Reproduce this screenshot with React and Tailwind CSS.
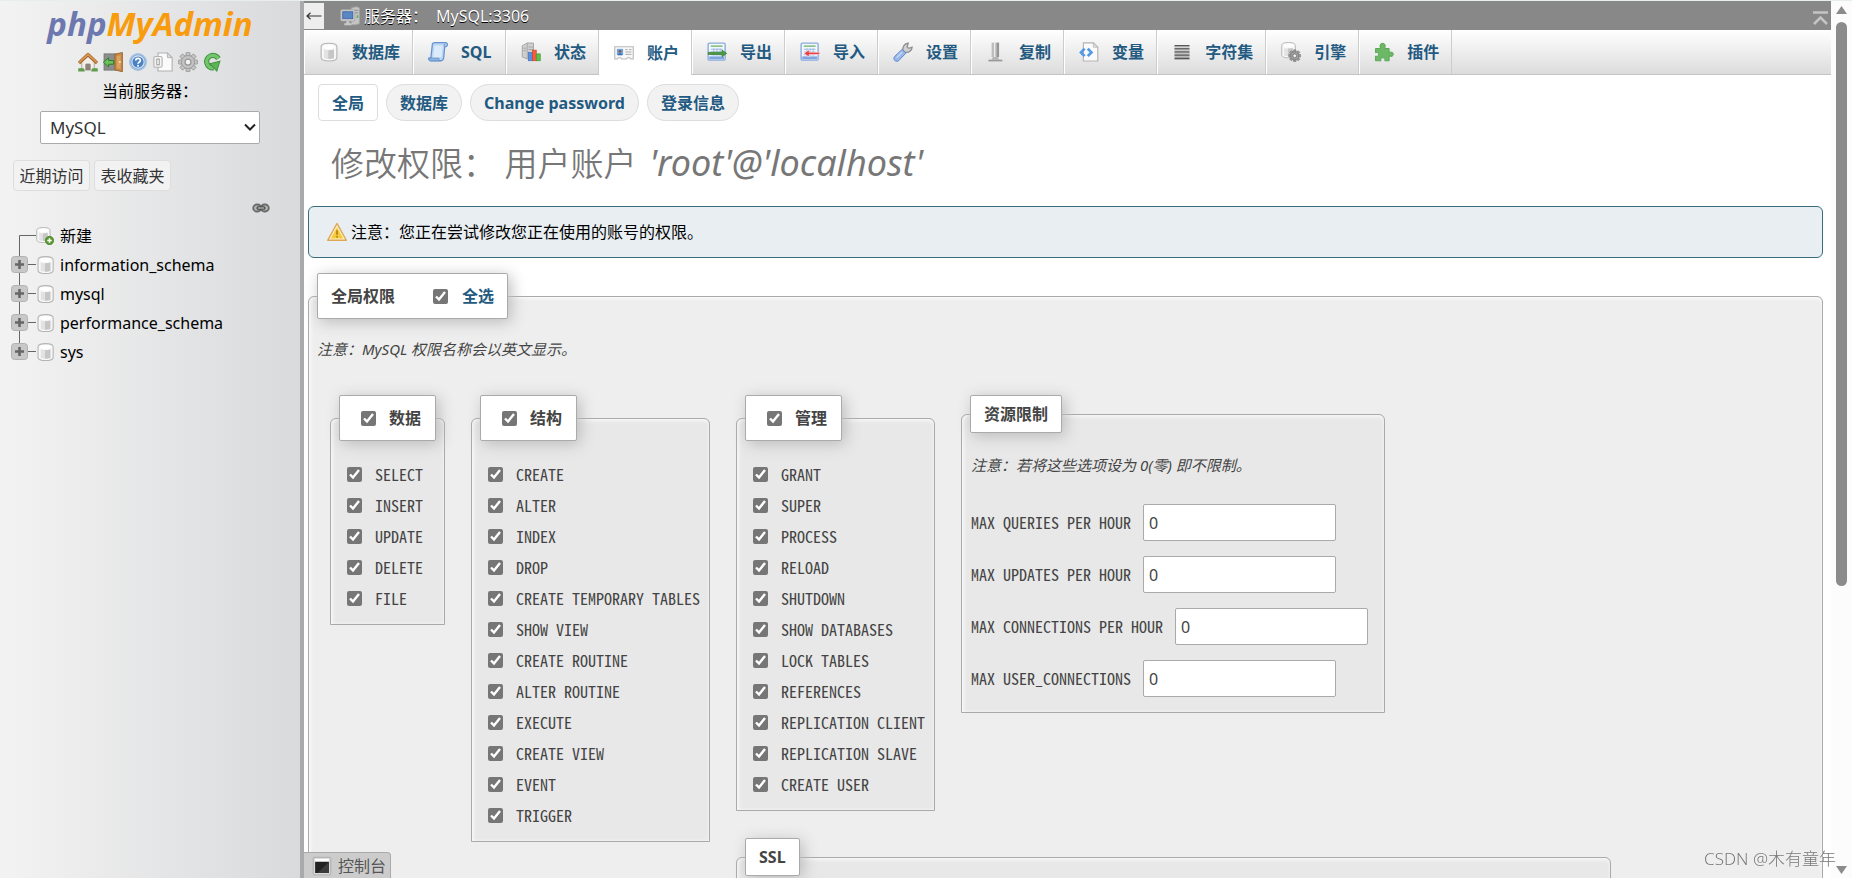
import React from "react";

/* ---------- icons ---------- */

const Icon = ({ children, size = "size-5", box = "0 0 16 16" }) => (
  <svg viewBox={box} className={`${size} shrink-0`} aria-hidden="true">
    {children}
  </svg>
);

const Cylinder = ({ x = 0, y = 0 }) => (
  <g transform={`translate(${x} ${y})`}>
    <path d="M.7 3.300C.7 1.200 3.500.5 7 .5s6.300.7 6.300 2.800v8.600c0 2.100-2.800 2.800-6.300 2.800S.7 14 .7 11.900z" fill="#f7f7f7" stroke="#b4b4b4" strokeWidth=".9" />
    <path d="M3 5.500c2.500.8 5.500.8 8 0v7c-2.300.8-5.700.8-8 0z" fill="#e2e2e2" />
    <path d="M6.500 6.100c1.600 0 3.200-.2 4.500-.6v7c-1.300.4-2.900.6-4.500.6z" fill="#c6c6c6" />
    <ellipse cx="7" cy="3.300" rx="4.800" ry="1.700" fill="#fff" />
  </g>
);

const DbIcon = () => <Icon size="size-[18px]" box="-1 0 15 15"><Cylinder /></Icon>;

const NewDbIcon = () => (
  <Icon size="size-[18px]" box="0 0 16 16">
    <g transform="scale(.94)"><Cylinder /></g>
    <circle cx="12" cy="12" r="3.700" fill="#5a9a2f" stroke="#3f7a1d" strokeWidth=".6" />
    <path d="M12 10v4M10 12h4" stroke="#fff" strokeWidth="1.400" />
  </Icon>
);

const HomeIcon = () => (
  <Icon>
    <path d="M3 8v6.500h3V10h4v4.500h3V8L8 3.500z" fill="#f1eee8" stroke="#a79f93" strokeWidth=".7" />
    <rect x="6.300" y="9.300" width="3.400" height="5.400" fill="#8d8378" />
    <path d="M.8 8.800 8 2l7.200 6.800" fill="none" stroke="#a8672a" strokeWidth="2.600" strokeLinejoin="round" />
    <path d="M1 8.400 8 1.900l7 6.500" fill="none" stroke="#d99a55" strokeWidth="1.200" />
    <path d="M.2 13h4.300l1 2.500H.2zM11.500 13h4.300v2.500h-5.300z" fill="#5c9e4c" />
  </Icon>
);

const ExitIcon = () => (
  <Icon>
    <rect x=".8" y="1.500" width="10" height="13" fill="#8b8f8c" stroke="#6d6f6e" strokeWidth=".6" />
    <path d="M9.500 1.800 15.500.4v15.400l-6-1.500z" fill="#c98a45" stroke="#93602a" strokeWidth=".7" />
    <path d="M11 3.200l3-.6v10.900l-3-.6z" fill="#dba263" />
    <circle cx="13.500" cy="8" r=".8" fill="#ffe9a0" />
    <path d="M.3 8.200 4.500 4.600v2.200h4v3h-4V12z" fill="#6cc05b" stroke="#2f7f2c" strokeWidth=".8" />
  </Icon>
);

const HelpIcon = () => (
  <Icon>
    <circle cx="8" cy="8" r="6.600" fill="#7ea7d8" stroke="#a9c2de" strokeWidth="1.200" />
    <circle cx="8" cy="8" r="4.900" fill="#4a80c4" stroke="#d8e6f5" strokeWidth=".9" />
    <path d="M6.200 6.800c0-2.300 3.700-2.300 3.700-.1 0 1.300-1.800 1.400-1.800 2.700" fill="none" stroke="#fff" strokeWidth="1.400" />
    <circle cx="8" cy="11" r=".8" fill="#fff" />
  </Icon>
);

const DocsIcon = () => (
  <Icon>
    <path d="M4 .8h7.500L15.300 4.500v10.700H4z" fill="#fbfbfb" stroke="#b0b0b0" strokeWidth=".9" />
    <path d="M11.500.8v3.700h3.800z" fill="#ddd" stroke="#b0b0b0" strokeWidth=".7" />
    <rect x=".7" y="3.600" width="6.600" height="8.600" rx="1.200" fill="#f4f4f4" stroke="#b3b3b3" strokeWidth=".9" />
    <rect x="3" y="5.700" width="2" height="4.500" fill="#fff" stroke="#a3a3a3" strokeWidth=".9" />
  </Icon>
);

const Gear = ({ cx, cy, r, fill, stroke }) => (
  <g transform={`translate(${cx} ${cy}) scale(${r / 8})`}>
    {[0, 45, 90, 135, 180, 225, 270, 315].map((a) => (
      <rect key={a} x="-1.600" y="-7.700" width="3.200" height="4" rx=".5" transform={`rotate(${a})`} fill={fill} stroke={stroke} strokeWidth=".7" />
    ))}
    <circle r="5.200" fill={fill} stroke={stroke} strokeWidth=".7" />
    <circle r="2.400" fill="#f2f2f2" stroke={stroke} strokeWidth="1" />
  </g>
);

const GearIcon = () => <Icon><Gear cx={8} cy={8} r={8} fill="#c4c4c4" stroke="#969696" /></Icon>;

const ReloadIcon = () => (
  <Icon>
    <path d="M12.300 5.300A5 5 0 1 0 8.500 12.700" fill="none" stroke="#3f9440" strokeWidth="4.200" />
    <path d="M12.300 5.300A5 5 0 1 0 8.500 12.700" fill="none" stroke="#74c46c" strokeWidth="2.600" />
    <path d="M6 8.300h8.300L10 15.400z" fill="#5db456" stroke="#3f9440" strokeWidth=".8" transform="rotate(-14 10 11)" />
  </Icon>
);

const LinkIcon = () => (
  <Icon size="h-[10px] w-[18px]" box="0 0 18 10">
    <rect x="1.200" y="1.500" width="8" height="7" rx="3.500" fill="#b4b4b4" stroke="#6a6a6a" strokeWidth="1.800" />
    <rect x="8.800" y="1.500" width="8" height="7" rx="3.500" fill="#b4b4b4" stroke="#6a6a6a" strokeWidth="1.800" />
    <rect x="5" y="3.800" width="8" height="2.400" rx="1.200" fill="#ddd" stroke="#444" strokeWidth="1.200" />
  </Icon>
);

const ServerIcon = () => (
  <Icon>
    <path d="M9 1.500 13 .6l2.500.8v12.800l-3 .8H9z" fill="#c4c4c4" stroke="#a5a5a5" strokeWidth=".7" />
    <path d="M10 3.500h4.500M10 5.500h4.500" stroke="#888" strokeWidth=".7" />
    <path d="M14 7.500v2" stroke="#4fae4a" strokeWidth="1.200" />
    <rect x=".6" y="3" width="11.300" height="9" rx=".8" fill="#d0d0d0" stroke="#a5a5a5" strokeWidth=".7" />
    <rect x="2.200" y="4.600" width="8.100" height="5.600" fill="#5b86c4" stroke="#335d9e" strokeWidth=".6" />
    <path d="M5 12.200h2.600v1.600H9.200v1.500H3.400v-1.500H5z" fill="#c9c9c9" />
  </Icon>
);

const SqlIcon = () => (
  <Icon>
    <path d="M3.500 1.500c.4-.8 1-1 2-1h8.200c1.500 0 2 1 1.700 2.200-.2.900-.9 1.100-2 1.100L12.600 12c-.1 1.700-.8 3-2.400 3H2C.8 15 .4 13.800.7 12.800h1.600z" fill="#bcd6f5" stroke="#6492cc" strokeWidth="1" />
    <path d="M5.200 2.700h6.600L10.800 12c-2 .5-4.500.5-6.700.2z" fill="#dcebfb" />
    <path d="M.7 12.900h8c-.1 1 .3 1.800 1.300 2.100H2C.8 15 .4 13.900.7 12.900zM13.500 3.700c-1-.4-.9-2 .3-2.100" fill="#8fb5e4" stroke="#6492cc" strokeWidth=".7" />
  </Icon>
);

const StatusIcon = () => (
  <Icon>
    <path d="M1 3 5 .8h5V13.500H5L1 12z" fill="#cfcfcf" stroke="#a0a0a0" strokeWidth=".7" />
    <path d="M5 .9v12.600M2 5h2M2 7h2M6 4h3.500M6 6h3.500" stroke="#a3a3a3" strokeWidth=".7" />
    <rect x="6" y="8.500" width="3" height="6.500" fill="#5a8fe0" stroke="#3a6cc0" strokeWidth=".5" />
    <rect x="9.200" y="6.500" width="3" height="8.500" fill="#f0603f" stroke="#c93f22" strokeWidth=".5" />
    <rect x="12.400" y="9.500" width="3" height="5.500" fill="#5fbf4b" stroke="#3c962c" strokeWidth=".5" />
  </Icon>
);

const UsersIcon = () => (
  <Icon>
    <path d="M.6 3h14.800v9.800h-2l-.7-1h-1.900l-.7 1H6l-.7-1H3.400l-.7 1H.6z" fill="#f8f8f8" stroke="#b9b9b9" strokeWidth=".9" />
    <rect x="2.300" y="4.700" width="5" height="5" fill="#6ea3e2" />
    <circle cx="4.800" cy="6.600" r="1.100" fill="#8a5a34" />
    <path d="M3 9.700c.2-2 3.400-2 3.600 0z" fill="#3e6fb4" />
    <path d="M9 5.300h2M12 5.300h2M9 7.200h5M9 9.100h5" stroke="#aaa" strokeWidth=".8" />
  </Icon>
);

const Sheet = () => (
  <>
    <rect x=".9" y=".9" width="13.600" height="13.600" rx="1" fill="#f3f8ff" stroke="#8cabdc" strokeWidth="1.100" />
    <rect x="1.800" y="11.500" width="11.800" height="2.300" fill="#7fa5e0" />
    <path d="M3 3.300h9.500" stroke="#76b56a" strokeWidth="1.100" />
    <path d="M3 5.800h9.500M3 8h9.500M3 10.200h9.500M5.500 5v6M8 5v6M10.500 5v6" stroke="#9fb9e2" strokeWidth=".8" />
  </>
);

const ExportIcon = () => (
  <Icon>
    <Sheet />
    <path d="M1 8.200h11V6.400l3.800 2.700-3.800 2.700V10H1z" fill="#4b9a42" stroke="#2f7a2b" strokeWidth=".5" />
  </Icon>
);

const ImportIcon = () => (
  <Icon>
    <Sheet />
    <path d="M15.700 8.200H7.300V6.200L3.200 9.100l4.100 2.900V10h8.400z" fill="#ee3f3f" stroke="#fff" strokeWidth=".4" />
  </Icon>
);

const WrenchIcon = () => (
  <Icon>
    <path d="M8 6.800C7.400 4 9 1.200 12.200.9L11.300 3.800l1.300 1.300 2.700-1C15.200 6.900 12.700 8.900 9.600 8.200z" fill="#d0d0d0" stroke="#909090" strokeWidth="1" />
    <path d="M7.300 5.900 10.300 8.900 4.900 14.600c-1.100 1.100-2.500 1-3.500.2-.9-.9-1-2.300.1-3.400z" fill="#98b7ea" stroke="#6289cc" strokeWidth=".8" />
    <path d="M7.300 8 3 12.500" stroke="#c8daf7" strokeWidth="1.100" />
  </Icon>
);

const ReplicationIcon = () => (
  <Icon>
    <path d="M4.500.5h2v11.500h-2z" fill="#bdbdbd" />
    <path d="M6.500.5h1v11.500h-1z" fill="#ececec" />
    <path d="M7.500.5h3v11.500h-3z" fill="#b3b3b3" />
    <path d="M9 .5h1.200v11.500H9z" fill="#8d8d8d" />
    <path d="M5.500 12h4l1 2h2.500v1.400H2V14h2.500z" fill="#b6b6b6" />
    <path d="M2 15h11" stroke="#8f8f8f" strokeWidth=".8" />
  </Icon>
);

const VariablesIcon = () => (
  <Icon>
    <path d="M3.500.7h8L15 4.200v11H3.500z" fill="#fafafa" stroke="#b3b3b3" strokeWidth=".9" />
    <path d="M11.500.7v3.500H15z" fill="#e2e2e2" stroke="#b3b3b3" strokeWidth=".6" />
    <path d="M4.500 5.300 1.600 8.300l2.900 3M7 5.300l2.900 3-2.900 3" fill="none" stroke="#5599e6" strokeWidth="2.200" />
  </Icon>
);

const CharsetIcon = () => (
  <Icon>
    {[2.500, 5, 7.500, 10, 12.500].map((y) => (
      <g key={y}>
        <path d={`M2 ${y + 0.500}h12`} stroke="#565656" strokeWidth="1.200" />
        <path d={`M2 ${y + 1.500}h12`} stroke="#b5b5b5" strokeWidth=".8" />
      </g>
    ))}
  </Icon>
);

const EngineIcon = () => (
  <Icon>
    <g transform="scale(.86)"><Cylinder /></g>
    <Gear cx={11} cy={11} r={5} fill="#a0a0a0" stroke="#6e6e6e" />
  </Icon>
);

const PluginIcon = () => (
  <Icon>
    <path d="M1.200 5.200h4.100C4.300 3.300 4.800 1 6.900 1s2.600 2.300 1.600 4.200h3.600v3.300c1.900-.9 3.300-.3 3.300 1.300s-1.400 2.200-3.300 1.300v3.900H8.600c.5-1.500 0-2.400-1.500-2.400s-2 .9-1.500 2.400H1.200v-3.700c1.500.5 2.400 0 2.400-1.400S2.700 8 1.200 8.500z" fill="#6cb866" stroke="#5da85a" strokeWidth=".8" />
  </Icon>
);

const WarningIcon = () => (
  <Icon>
    <path d="M8 1.200 15.400 14.600H.6z" fill="#fdf3d0" stroke="#dfa653" strokeWidth="1.200" strokeLinejoin="round" />
    <path d="M8 4.200 13 13.100H3z" fill="#f5cb3c" />
    <path d="M8 6.500v3.600" stroke="#b9861d" strokeWidth="1.500" />
    <circle cx="8" cy="11.700" r=".8" fill="#b9861d" />
  </Icon>
);

const ConsoleIcon = () => (
  <Icon>
    <rect x="1" y="1" width="14" height="14" rx="1" fill="#d9d9d9" stroke="#b5b5b5" />
    <rect x="2.500" y="2.300" width="11" height="2.300" fill="#fff" />
    <path d="M2.500 4.600h11v9h-11z" fill="#222" />
    <path d="M13.500 4.600v9h-9z" fill="#3c3c3c" />
  </Icon>
);

/* ---------- sidebar ---------- */

const TreeRow = ({ name, fresh, last }) => (
  <li className="flex h-[29px] items-center">
    {fresh ? (
      <svg viewBox="0 0 25 29" className="h-[29px] w-[25px]" aria-hidden="true">
        <path d="M8.500 29V14.500H25" fill="none" stroke="#666" />
      </svg>
    ) : (
      <button type="button" aria-label={`展开 ${name}`} className="h-[29px] w-[25px]">
        <svg viewBox="0 0 25 29" className="h-[29px] w-[25px]" aria-hidden="true">
          <path d={last ? "M8.500 0V14.500H25" : "M8.500 0V29M8.500 14.500H25"} fill="none" stroke="#666" />
          <rect x=".5" y="6.500" width="16" height="16" rx="3" fill="#c8c8c8" stroke="#b2b2b2" />
          <path d="M8.500 10v9M4 14.500h9" stroke="#666" strokeWidth="2.600" />
        </svg>
      </button>
    )}
    {fresh ? <NewDbIcon /> : <DbIcon />}
    <a href="#db" className="ml-1.5 text-black">{name}</a>
  </li>
);

const Sidebar = () => (
  <aside className="w-[304px] shrink-0 border-r-4 border-[#aaa] bg-linear-to-r from-[#f3f3f3] to-[#d9dadc] text-black">
    <a href="#home" className="flex h-11 items-center justify-center text-[33px] leading-none font-bold italic">
      <span className="text-[#6c78af]">php</span>
      <span className="text-[#f89c0e]">MyAdmin</span>
    </a>
    <nav className="mt-[7px] flex justify-center gap-[5px]">
      {[HomeIcon, ExitIcon, HelpIcon, DocsIcon, GearIcon, ReloadIcon].map((I, i) => (
        <a key={i} href="#tool"><I /></a>
      ))}
    </nav>
    <div className="px-10 text-center">
      <label htmlFor="server" className="mt-[7px] block leading-6">当前服务器：</label>
      <div className="relative mt-2">
        <select id="server" className="h-[33px] w-full appearance-none rounded-xs border border-[#aaa] bg-white px-[9px] text-[17px] text-[#333]">
          <option>MySQL</option>
        </select>
        <svg viewBox="0 0 12 8" className="pointer-events-none absolute top-3 right-1 h-2 w-3" aria-hidden="true">
          <path d="M1 1.500 6 6.500l5-5" fill="none" stroke="#222" strokeWidth="2" />
        </svg>
      </div>
    </div>
    <div className="mt-4 flex gap-1 pl-[13px]">
      {["近期访问", "表收藏夹"].map((t) => (
        <button key={t} type="button" className="h-[31px] w-[77px] rounded-sm border border-[#ddd] bg-[#f2f2f2] whitespace-nowrap text-[#333]">{t}</button>
      ))}
    </div>
    <div className="mt-3 flex justify-end pr-[30px]"><LinkIcon /></div>
    <ul className="mt-2 pl-[11px]">
      <TreeRow name="新建" fresh />
      <TreeRow name="information_schema" />
      <TreeRow name="mysql" />
      <TreeRow name="performance_schema" />
      <TreeRow name="sys" last />
    </ul>
  </aside>
);

/* ---------- top area ---------- */

const tabs = [
  ["数据库", () => <Icon size="h-5 w-5" box="-1 -.5 16 16"><Cylinder /></Icon>],
  ["SQL", SqlIcon],
  ["状态", StatusIcon],
  ["账户", UsersIcon],
  ["导出", ExportIcon],
  ["导入", ImportIcon],
  ["设置", WrenchIcon],
  ["复制", ReplicationIcon],
  ["变量", VariablesIcon],
  ["字符集", CharsetIcon],
  ["引擎", EngineIcon],
  ["插件", PluginIcon],
];

const TopBar = () => (
  <header className="flex h-[29px] items-center bg-[#888]">
    <button type="button" aria-label="隐藏面板" className="flex h-[26px] w-5 items-center justify-center bg-[#eee]">
      <svg viewBox="0 0 16 8" className="h-2 w-4" aria-hidden="true">
        <path d="M15.500 4H1M4.500.8 1 4l3.500 3.200" fill="none" stroke="#333" strokeWidth="1.200" />
      </svg>
    </button>
    <a href="#server" className="ml-4 flex items-center gap-1 text-white text-shadow-[0_1px_0_#000]">
      <ServerIcon />
      <span>服务器：</span>
      <span className="ml-1">MySQL:3306</span>
    </a>
    <button type="button" aria-label="收起" className="mt-1 mr-[3px] ml-auto">
      <svg viewBox="0 0 15 14" className="h-3.5 w-[15px]" aria-hidden="true">
        <path d="M0 1.500h15M1 13l6.500-6.500L14 13" fill="none" stroke="#c4c4c4" strokeWidth="2.600" />
      </svg>
    </button>
  </header>
);

const Tabs = () => (
  <nav className="flex h-[45px] border-b border-[#c4c4c4] bg-linear-to-b from-white to-[#dcdcdc] font-bold text-[#235a81]">
    {tabs.map(([name, I]) => (
      <a
        key={name}
        href="#tab"
        className={
          name === "账户"
            ? "-mb-px flex items-center gap-[13px] border-r border-[#ccc] bg-white pr-3 pl-[15px]"
            : "flex items-center gap-[13px] border-r border-l border-r-[#ccc] border-l-white pr-3 pl-[14px]"
        }
      >
        <I />
        <span className="min-w-8">{name}</span>
      </a>
    ))}
  </nav>
);

/* ---------- privileges ---------- */

const legendBox = "ml-2 flex items-center rounded-xs border border-[#aaa] bg-white font-bold whitespace-nowrap shadow-[3px_3px_15px_#bbb]";
const fieldBox = "rounded-t-md border border-[#aaa] shadow-[inset_1px_1px_4px_#fff]";
const check = "size-[15px] shrink-0 accent-[#767676]";
const mono = "font-['Noto_Sans_Mono_CJK_SC','Liberation_Mono',monospace]";

const groups = [
  ["数据", ["SELECT", "INSERT", "UPDATE", "DELETE", "FILE"], "pr-[21px]"],
  ["结构", ["CREATE", "ALTER", "INDEX", "DROP", "CREATE TEMPORARY TABLES", "SHOW VIEW", "CREATE ROUTINE", "ALTER ROUTINE", "EXECUTE", "CREATE VIEW", "EVENT", "TRIGGER"], "pr-[9px]"],
  ["管理", ["GRANT", "SUPER", "PROCESS", "RELOAD", "SHUTDOWN", "SHOW DATABASES", "LOCK TABLES", "REFERENCES", "REPLICATION CLIENT", "REPLICATION SLAVE", "CREATE USER"], "pr-[9px]"],
];

const Group = ({ title, items, pad }) => (
  <fieldset className={`${fieldBox} bg-[#e8e8e8]`}>
    <legend className={legendBox}>
      <label className="flex h-11 items-center gap-[13px] pr-[14px] pl-[21px]">
        <input type="checkbox" defaultChecked className={check} />
        {title}
      </label>
    </legend>
    <div className={`${pad} mt-[18px] pb-2.5 pl-4`}>
      {items.map((p) => (
        <label key={p} className={`${mono} flex h-[31px] items-center gap-[13px] leading-5 whitespace-nowrap`}>
          <input type="checkbox" defaultChecked className={check} />
          <span className="pb-0.5">{p}</span>
        </label>
      ))}
    </div>
  </fieldset>
);

const limits = ["MAX QUERIES PER HOUR", "MAX UPDATES PER HOUR", "MAX CONNECTIONS PER HOUR", "MAX USER_CONNECTIONS"];

const Limits = () => (
  <fieldset className={`${fieldBox} bg-[#e8e8e8]`}>
    <legend className={`${legendBox} h-[38px] px-[13px]`}>资源限制</legend>
    <div className="w-[422px] pr-4 pb-[15px] pl-[9px]">
      <p className="mt-5 mb-[27px] text-[15px] leading-6 italic">注意：若将这些选项设为 0(零) 即不限制。</p>
      <div className="flex flex-col gap-[15px]">
        {limits.map((l) => (
          <label key={l} className={`${mono} flex items-center gap-3 leading-5 whitespace-nowrap`}>
            <span className="pb-0.5">{l}</span>
            <input type="text" defaultValue="0" className="h-[37px] w-[193px] rounded-xs border border-[#aaa] bg-white px-[5px] font-['Noto_Sans',sans-serif] text-[#444]" />
          </label>
        ))}
      </div>
    </div>
  </fieldset>
);

const subTabs = ["数据库", "Change password", "登录信息"];

export default function App() {
  return (
    <div className="flex h-screen overflow-hidden border-t border-[#e8eeee] bg-white font-['Noto_Sans','Noto_Sans_CJK_SC',sans-serif] text-base leading-6 text-[#444]">
      <Sidebar />
      <div className="relative flex min-w-0 flex-1 flex-col">
        <TopBar />
        <Tabs />
        <main className="min-h-0 flex-1 overflow-hidden px-1 pr-2">
          <nav className="mt-[9px] flex gap-2 pl-2.5 font-bold text-[#235a81]">
            <a href="#global" className="flex h-[37px] items-center rounded-sm border border-[#ddd] bg-white px-[13px]">全局</a>
            {subTabs.map((t) => (
              <a key={t} href="#sub" className="flex h-[37px] items-center rounded-full border border-[#ddd] bg-[#f2f2f2] px-[13px]">{t}</a>
            ))}
          </nav>
          <h2 className="mt-[18px] pl-[23px] text-[33px] leading-[48px] font-[350] text-[#777]">
            修改权限： 用户账户 <em className="ml-1 text-[36px] font-normal">'root'@'localhost'</em>
          </h2>
          <div className="mt-[18px] flex h-[52px] items-center gap-1 rounded-md border border-[#3a6c7e] bg-[#e8eef1] pl-[18px] text-black">
            <WarningIcon />
            <span>注意：您正在尝试修改您正在使用的账号的权限。</span>
          </div>
          <fieldset className={`${fieldBox} mt-[15px] min-w-0 bg-[#eee] pb-10`}>
            <legend className={`${legendBox} h-[46px] px-[13px]`}>
              全局权限
              <label className="ml-[38px] flex items-center gap-[14px] text-[#235a81]">
                <input type="checkbox" defaultChecked className={check} />
                全选
              </label>
            </legend>
            <p className="mt-[18px] pl-2 text-[15px] leading-6 italic">注意：MySQL 权限名称会以英文显示。</p>
            <div className="mt-[34px] flex items-start gap-[26px] pl-[21px]">
              {groups.slice(0, 2).map(([t, items, pad]) => <Group key={t} title={t} items={items} pad={pad} />)}
              <div className="flex flex-col">
                <div className="flex items-start gap-[26px]">
                  <Group title={groups[2][0]} items={groups[2][1]} pad={groups[2][2]} />
                  <Limits />
                </div>
                <fieldset className={`${fieldBox} mt-[27px] w-[875px] bg-[#e8e8e8] pb-24`}>
                  <legend className={`${legendBox} h-[38px] px-[13px]`}>SSL</legend>
                </fieldset>
              </div>
            </div>
          </fieldset>
        </main>
        <button type="button" className="absolute bottom-0 left-0 flex h-[26px] items-center gap-1.5 rounded-tr-sm border-t border-r border-[#aaa] bg-[#ccc] pr-1 pl-2 text-[#555]">
          <ConsoleIcon />
          控制台
        </button>
      </div>
      <div className="flex w-[21px] shrink-0 flex-col items-center bg-[#fcfcfc] pt-[5px] pb-1" aria-hidden="true">
        <svg viewBox="0 0 11 8" className="h-2 w-[11px]"><path d="M5.500 0 11 8H0z" fill="#8b8b8b" /></svg>
        <div className="mt-2 h-[65%] w-[11px] rounded-full bg-[#8b8b8b]" />
        <svg viewBox="0 0 11 8" className="mt-auto h-2 w-[11px]"><path d="M0 0h11L5.500 8z" fill="#8b8b8b" /></svg>
      </div>
      <div className="pointer-events-none fixed right-4 bottom-[7px] text-[17px] leading-6 font-light text-[#777] text-shadow-[0_0_1px_#fff]">CSDN @木有童年</div>
    </div>
  );
}
